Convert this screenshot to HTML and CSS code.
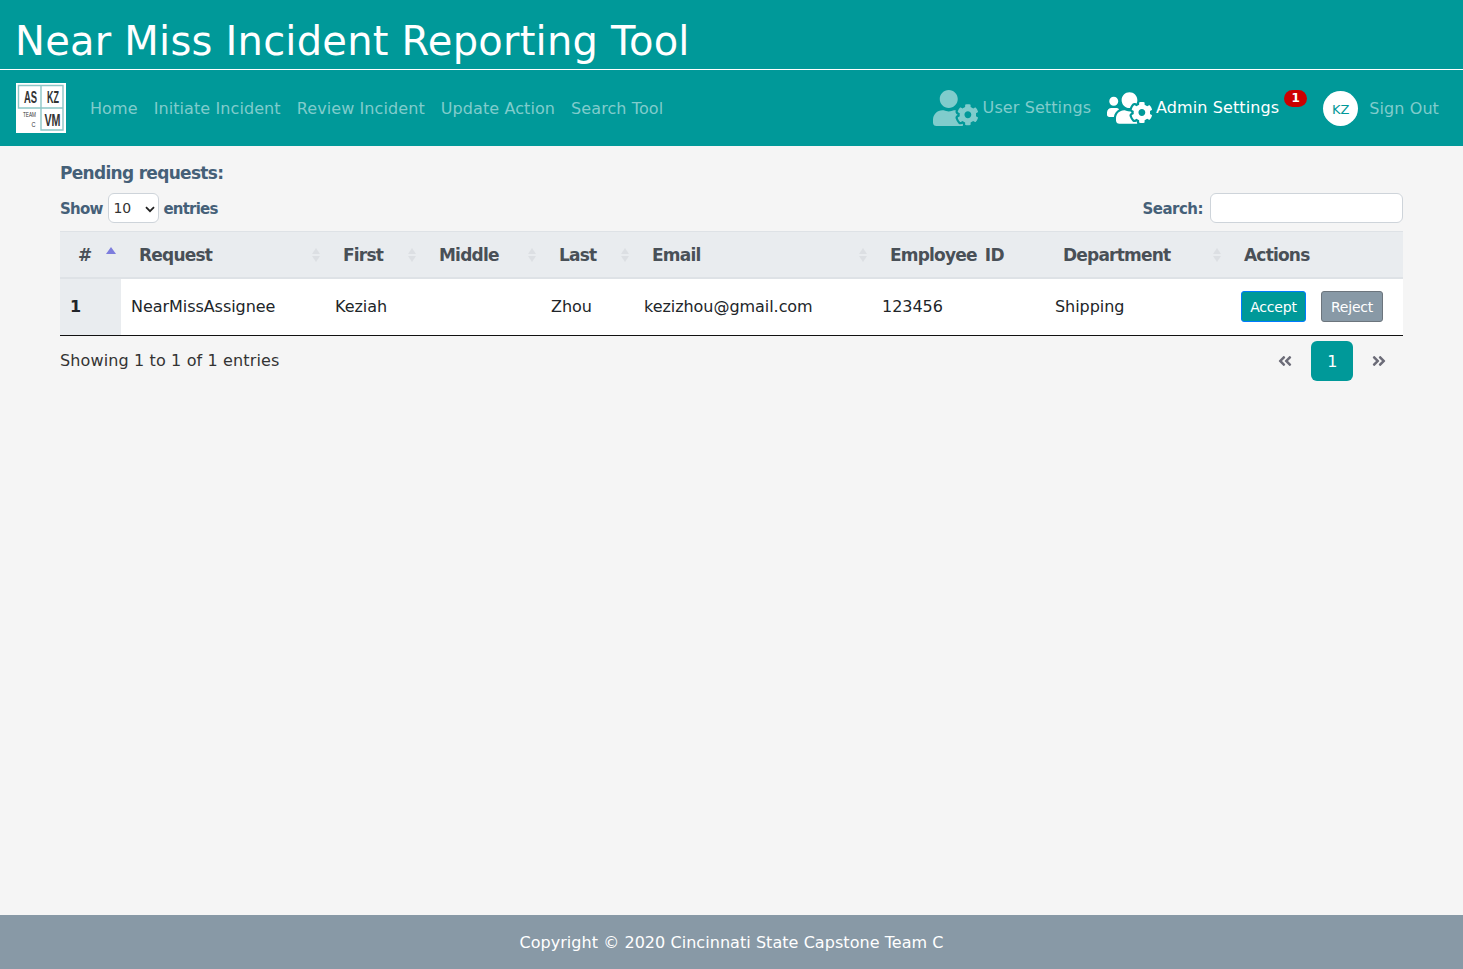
FILE: index.html
```html
<!DOCTYPE html>
<html lang="en">
<head>
  <meta charset="UTF-8">
  <meta name="viewport" content="width=device-width, initial-scale=1.0">
  <title>Near Miss Incident Reporting Tool</title>
  <link rel="stylesheet" href="styles.css">
</head>
<body>
  <header class="site-header">
    <h1 class="site-title">Near Miss Incident Reporting Tool</h1>
    <nav class="navbar">
      <svg class="logo" viewBox="0 0 50 50">
        <rect width="50" height="50" fill="#fff"/>
        <path d="M2.5 2.5H25V25H2.5zM25 2.5H47V25H25zM25 25H47V47H25z" fill="none" stroke="#8cc6c6" stroke-width="1.4"/>
        <text class="logo-big" transform="translate(14.5 20) scale(.59 1)">AS</text>
        <text class="logo-big" transform="translate(37 20) scale(.56 1)">KZ</text>
        <text class="logo-big" transform="translate(36.5 42.5) scale(.67 1)">VM</text>
        <text class="logo-small" transform="translate(13.5 34) scale(.67 1)">TEAM</text>
        <text class="logo-small" transform="translate(17.5 44) scale(.8 1)">C</text>
      </svg>
      <ul class="nav-links">
        <li><a href="#">Home</a></li>
        <li><a href="#">Initiate Incident</a></li>
        <li><a href="#">Review Incident</a></li>
        <li><a href="#">Update Action</a></li>
        <li><a href="#">Search Tool</a></li>
      </ul>
      <div class="nav-right">
        <a href="#" class="nav-icon-link">
          <svg class="nav-icon" viewBox="0 0 640 512"><path d="M610.5 373.3c2.6-14.1 2.6-28.5 0-42.6l25.8-14.9c3-1.7 4.3-5.2 3.3-8.5-6.7-21.6-18.2-41.2-33.2-57.4-2.3-2.5-6-3.1-9-1.4l-25.8 14.9c-10.9-9.3-23.4-16.5-36.9-21.3v-29.8c0-3.4-2.4-6.4-5.7-7.1-22.3-5-45-4.8-66.2 0-3.3.7-5.7 3.7-5.7 7.1v29.8c-13.5 4.8-26 12-36.9 21.3l-25.8-14.9c-2.9-1.7-6.7-1.1-9 1.4-15 16.2-26.5 35.8-33.2 57.4-1 3.3.4 6.8 3.3 8.5l25.8 14.9c-2.6 14.1-2.6 28.5 0 42.6l-25.8 14.9c-3 1.7-4.3 5.2-3.3 8.5 6.7 21.6 18.2 41.1 33.2 57.4 2.3 2.5 6 3.1 9 1.4l25.8-14.9c10.9 9.3 23.4 16.5 36.9 21.3v29.8c0 3.4 2.4 6.4 5.7 7.1 22.3 5 45 4.8 66.2 0 3.3-.7 5.7-3.7 5.7-7.1v-29.8c13.5-4.8 26-12 36.9-21.3l25.8 14.9c2.9 1.7 6.7 1.1 9-1.4 15-16.2 26.5-35.8 33.2-57.4 1-3.3-.4-6.8-3.3-8.5l-25.8-14.9zM496 400.5c-26.8 0-48.5-21.8-48.5-48.5s21.8-48.5 48.5-48.5 48.5 21.8 48.5 48.5-21.7 48.5-48.5 48.5zM224 256c70.7 0 128-57.3 128-128S294.7 0 224 0 96 57.3 96 128s57.3 128 128 128zm201.2 226.5c-2.3-1.2-4.6-2.6-6.8-3.9l-7.9 4.6c-6 3.4-12.8 5.3-19.6 5.3-10.9 0-21.4-4.6-28.9-12.6-18.3-19.8-32.3-43.9-40.2-69.6-5.5-17.7 1.9-36.4 17.9-45.7l7.9-4.6c-.1-2.6-.1-5.2 0-7.8l-7.9-4.6c-16-9.2-23.4-28-17.9-45.7.9-2.9 2.2-5.8 3.2-8.7-3.8-.3-7.5-1.2-11.4-1.2h-16.7c-22.2 10.2-46.9 16-72.9 16s-50.6-5.8-72.9-16h-16.7C60.2 288 0 348.2 0 422.4V464c0 26.5 21.5 48 48 48h352c10.1 0 19.5-3.2 27.2-8.5-1.2-3.8-2-7.7-2-11.8v-9.2z"/></svg>
          <span class="nav-label">User Settings</span>
        </a>
        <a href="#" class="nav-icon-link active">
          <svg class="nav-icon" viewBox="0 0 640 512"><path d="M610.5 341.3c2.6-14.1 2.6-28.5 0-42.6l25.8-14.9c3-1.7 4.3-5.2 3.3-8.5-6.7-21.6-18.2-41.2-33.2-57.4-2.3-2.5-6-3.1-9-1.4l-25.8 14.9c-10.9-9.3-23.4-16.5-36.9-21.3v-29.8c0-3.4-2.4-6.4-5.7-7.1-22.3-5-45-4.8-66.2 0-3.3.7-5.7 3.7-5.7 7.1v29.8c-13.5 4.8-26 12-36.9 21.3l-25.8-14.9c-2.9-1.7-6.7-1.1-9 1.4-15 16.2-26.5 35.8-33.2 57.4-1 3.3.4 6.8 3.3 8.5l25.8 14.9c-2.6 14.1-2.6 28.5 0 42.6l-25.8 14.9c-3 1.7-4.3 5.2-3.3 8.5 6.7 21.6 18.2 41.1 33.2 57.4 2.3 2.5 6 3.1 9 1.4l25.8-14.9c10.9 9.3 23.4 16.5 36.9 21.3v29.8c0 3.4 2.4 6.4 5.7 7.1 22.3 5 45 4.8 66.2 0 3.3-.7 5.7-3.7 5.7-7.1v-29.8c13.5-4.8 26-12 36.9-21.3l25.8 14.9c2.9 1.7 6.7 1.1 9-1.4 15-16.2 26.5-35.8 33.2-57.4 1-3.3-.4-6.8-3.3-8.5l-25.8-14.9zM496 368.5c-26.8 0-48.5-21.8-48.5-48.5s21.8-48.5 48.5-48.5 48.5 21.8 48.5 48.5-21.7 48.5-48.5 48.5zM96 224c35.3 0 64-28.7 64-64s-28.7-64-64-64-64 28.7-64 64 28.7 64 64 64zm224 32c1.9 0 3.7-.5 5.6-.6 8.3-21.7 20.5-42.1 36.3-59.2 7.4-8 17.9-12.6 28.9-12.6 6.9 0 13.7 1.8 19.6 5.3l7.9 4.6c.8-.5 1.6-.9 2.4-1.4 7-14.6 11.2-30.8 11.2-48 0-61.9-50.1-112-112-112S208 82.1 208 144c0 61.9 50.1 112 112 112zm105.2 194.5c-2.3-1.2-4.6-2.6-6.8-3.9-8.2 4.8-15.3 9.8-27.5 9.8-10.9 0-21.4-4.6-28.9-12.6-18.3-19.8-32.3-43.9-40.2-69.6-10.7-34.5 24.9-49.7 25.8-50.3-.1-2.6-.1-5.2 0-7.8l-7.9-4.6c-3.8-2.2-7-5-9.8-8.1-3.3.2-6.5.6-9.8.6-24.6 0-47.6-6-68.5-16h-8.3C179.6 288 128 339.6 128 403.2V432c0 26.5 21.5 48 48 48h255.4c-3.7-6-6.2-12.8-6.2-20.3v-9.2zM173.1 274.6C161.5 263.1 145.6 256 128 256H64c-35.3 0-64 28.7-64 64v32c0 17.7 14.3 32 32 32h65.9c6.3-47.4 34.9-87.3 75.2-109.4z"/></svg>
          <span class="nav-label">Admin Settings</span>
          <span class="badge">1</span>
        </a>
        <span class="avatar">KZ</span>
        <a href="#" class="sign-out">Sign Out</a>
      </div>
    </nav>
  </header>

  <main class="content">
    <h2 class="page-heading">Pending requests:</h2>
    <div class="table-controls">
      <label class="ctl-label"><span class="ctl-text">Show</span>
        <select>
          <option>10</option>
          <option>25</option>
        </select>
        <span class="ctl-text">entries</span></label>
      <label class="ctl-label search-label"><span class="ctl-text">Search:</span> <input type="text"></label>
    </div>

    <table class="requests">
      <colgroup>
        <col class="c-num"><col class="c-request"><col class="c-first"><col class="c-middle"><col class="c-last"><col class="c-email"><col class="c-emp"><col class="c-dept"><col class="c-actions">
      </colgroup>
      <thead>
        <tr>
          <th><div class="th-in">#<i class="sort-up"></i></div></th>
          <th><div class="th-in">Request<i class="sort"></i></div></th>
          <th><div class="th-in">First<i class="sort"></i></div></th>
          <th><div class="th-in">Middle<i class="sort"></i></div></th>
          <th><div class="th-in">Last<i class="sort"></i></div></th>
          <th><div class="th-in">Email<i class="sort"></i></div></th>
          <th><div class="th-in">Employee ID</div></th>
          <th><div class="th-in">Department<i class="sort"></i></div></th>
          <th><div class="th-in">Actions</div></th>
        </tr>
      </thead>
      <tbody>
        <tr>
          <td class="row-num">1</td>
          <td>NearMissAssignee</td>
          <td>Keziah</td>
          <td></td>
          <td>Zhou</td>
          <td>kezizhou@gmail.com</td>
          <td>123456</td>
          <td>Shipping</td>
          <td class="row-actions">
            <button class="btn btn-accept">Accept</button>
            <button class="btn btn-reject">Reject</button>
          </td>
        </tr>
      </tbody>
    </table>

    <div class="table-footer">
      <span class="entries-info">Showing 1 to 1 of 1 entries</span>
      <div class="pager">
        <svg class="pager-arrow" viewBox="0 0 448 512"><path d="M223.7 239l136-136c9.4-9.4 24.6-9.4 33.9 0l22.6 22.6c9.4 9.4 9.4 24.6 0 33.9L319.9 256l96.4 96.4c9.4 9.4 9.4 24.6 0 33.9L393.7 409c-9.4 9.4-24.6 9.4-33.9 0l-136-136c-9.5-9.4-9.5-24.6-.1-34zm-192 34l136 136c9.4 9.4 24.6 9.4 33.9 0l22.6-22.6c9.4-9.4 9.4-24.6 0-33.9L127.9 256l96.4-96.4c9.4-9.4 9.4-24.6 0-33.9L201.7 103c-9.4-9.4-24.6-9.4-33.9 0l-136 136c-9.5 9.4-9.5 24.6-.1 34z"/></svg>
        <span class="page-current">1</span>
        <svg class="pager-arrow" viewBox="0 0 448 512"><path d="M224.3 273l-136 136c-9.4 9.4-24.6 9.4-33.9 0l-22.6-22.6c-9.4-9.4-9.4-24.6 0-33.9l96.4-96.4-96.4-96.4c-9.4-9.4-9.4-24.6 0-33.9L54.3 103c9.4-9.4 24.6-9.4 33.9 0l136 136c9.5 9.4 9.5 24.6.1 34zm192-34l-136-136c-9.4-9.4-24.6-9.4-33.9 0l-22.6 22.6c-9.4 9.4-9.4 24.6 0 33.9l96.4 96.4-96.4 96.4c-9.4 9.4-9.4 24.6 0 33.9l22.6 22.6c9.4 9.4 24.6 9.4 33.9 0l136-136c9.4-9.2 9.4-24.4 0-33.8z"/></svg>
      </div>
    </div>
  </main>

  <footer class="site-footer">Copyright © 2020 Cincinnati State Capstone Team C</footer>
</body>
</html>
```

FILE: styles.css
```css
* {
  box-sizing: border-box;
}

body {
  margin: 0;
  min-height: 969px;
  display: flex;
  flex-direction: column;
  font-family: "DejaVu Sans", sans-serif;
  font-size: 15px;
  color: #333;
  background-color: #f5f5f5;
}

a {
  text-decoration: none;
}

.site-header {
  background-color: #009999;
}

.site-title {
  margin: 0;
  height: 70px;
  padding: 16px 15px 0;
  border-bottom: 1px solid #fff;
  font-size: 40px;
  font-weight: normal;
  line-height: 50px;
  letter-spacing: 0.23px;
  color: #fff;
}

.navbar {
  display: flex;
  align-items: center;
  height: 76px;
  padding: 0 24px 0 16px;
}

.logo {
  width: 50px;
  height: 50px;
}

.logo-big {
  font-family: "Liberation Sans", sans-serif;
  font-size: 16px;
  font-weight: bold;
  fill: #333;
  text-anchor: middle;
}

.logo-small {
  font-family: "Liberation Sans", sans-serif;
  font-size: 7px;
  fill: #333;
  text-anchor: middle;
}

.nav-links {
  display: flex;
  gap: 16px;
  list-style: none;
  margin: 0 0 0 24px;
  padding: 0;
  letter-spacing: 0.09px;
}

.nav-links a,
.nav-icon-link,
.sign-out {
  font-size: 16px;
  color: #80cccc;
}

.nav-right {
  display: flex;
  align-items: center;
  margin-left: auto;
  letter-spacing: 0.1px;
}

.nav-icon-link {
  position: relative;
  display: flex;
  align-items: center;
  gap: 5px;
  margin-right: 16px;
}

.nav-label {
  margin-top: -2px;
}

.nav-icon {
  width: 45px;
  height: 36px;
  fill: #80cccc;
}

.nav-icon-link.active {
  gap: 4px;
  color: #fff;
  margin-right: 44px;
}

.nav-icon-link.active .nav-icon {
  fill: #fff;
}

.badge {
  position: absolute;
  right: -28px;
  top: 0;
  width: 23px;
  height: 17px;
  border-radius: 9px;
  background-color: #cc0000;
  color: #fff;
  font-size: 12px;
  font-weight: bold;
  line-height: 17px;
  text-align: center;
}

.avatar {
  width: 35px;
  height: 35px;
  border-radius: 50%;
  margin-right: 11px;
  background-color: #fff;
  color: #009999;
  font-size: 13px;
  line-height: 37px;
  text-align: center;
}

.content {
  flex: 1;
  padding: 16px 60px 0;
}

.page-heading {
  margin: 0;
  font-size: 17px;
  line-height: 23px;
  letter-spacing: -0.7px;
  color: #456078;
}

.table-controls {
  display: flex;
  justify-content: space-between;
  align-items: center;
  margin-top: 8px;
  font-size: 15px;
  font-weight: bold;
  letter-spacing: -0.8px;
  color: #456078;
}

.ctl-label {
  display: flex;
  align-items: center;
}

.ctl-text {
  padding-top: 2px;
}

.table-controls select {
  appearance: none;
  width: 51px;
  height: 30px;
  margin: 0 4px 0 6px;
  padding-left: 4px;
  border: 1px solid #ced4da;
  border-radius: 6px;
  background: #fff url("data:image/svg+xml,%3Csvg xmlns='http://www.w3.org/2000/svg' viewBox='0 0 10 7'%3E%3Cpath d='M1 1.2l4 4 4-4' fill='none' stroke='%23222' stroke-width='1.8'/%3E%3C/svg%3E") no-repeat 36px 12px / 10px 7px;
  font-family: inherit;
  font-size: 14px;
  color: #333;
}

.table-controls input {
  width: 193px;
  height: 30px;
  margin-left: 7px;
  border: 1px solid #ced4da;
  border-radius: 6px;
  background-color: #fff;
}

.search-label {
  letter-spacing: -0.5px;
}

.requests {
  width: 100%;
  margin-top: 8px;
  table-layout: fixed;
  border-collapse: collapse;
  background-color: #fff;
}

.c-num { width: 61px; }
.c-request { width: 204px; }
.c-first { width: 96px; }
.c-middle { width: 120px; }
.c-last { width: 93px; }
.c-email { width: 238px; }
.c-emp { width: 173px; }
.c-dept { width: 181px; }
.c-actions { width: 177px; }

.requests th {
  height: 46px;
  padding: 1px 5px 0 18px;
  border-top: 1px solid #dee2e6;
  border-bottom: 2px solid #dee2e6;
  background-color: #e9ecef;
  font-size: 17px;
  letter-spacing: -0.8px;
  word-spacing: 3px;
  text-align: left;
  color: #495057;
}

.th-in {
  display: flex;
  justify-content: space-between;
  align-items: center;
}

.sort {
  display: flex;
  flex-direction: column;
  gap: 2px;
}

.sort::before,
.sort::after {
  content: "";
  border-left: 4px solid transparent;
  border-right: 4px solid transparent;
}

.sort::before {
  border-bottom: 6px solid #dcdfe3;
}

.sort::after {
  border-top: 6px solid #dcdfe3;
}

.sort-up {
  width: 0;
  height: 0;
  margin-top: -8px;
  border-left: 5px solid transparent;
  border-right: 5px solid transparent;
  border-bottom: 7px solid #7d7ddd;
}

.requests td {
  height: 58px;
  padding: 0 10px;
  border-bottom: 1px solid #111;
  font-size: 16px;
  letter-spacing: -0.05px;
  color: #212529;
}

.requests td.row-num {
  background-color: #e9ecef;
  font-weight: bold;
}

.requests td.row-actions {
  padding: 0 20px 0 15px;
  white-space: nowrap;
}

.btn {
  height: 31px;
  padding: 0;
  border-radius: 3px;
  font-family: inherit;
  font-size: 14px;
  letter-spacing: -0.2px;
  color: #fff;
}

.btn-accept {
  width: 65px;
  border: 1px solid #007bff;
  background-color: #009999;
}

.btn-reject {
  width: 62px;
  margin-left: 10px;
  border: 1px solid #6c757d;
  background-color: #8899a6;
}

.table-footer {
  display: flex;
  justify-content: space-between;
  align-items: center;
  margin-top: 5px;
  font-size: 16px;
  letter-spacing: 0.13px;
}

.entries-info {
  margin-bottom: 2px;
}

.pager {
  display: flex;
  align-items: center;
  gap: 18px;
  padding-right: 16px;
}

.pager-arrow {
  width: 16px;
  height: 16px;
  fill: #6c6c78;
}

.page-current {
  width: 42px;
  height: 40px;
  padding-left: 1px;
  border-radius: 6px;
  background-color: #009999;
  color: #fff;
  line-height: 41px;
  text-align: center;
}

.site-footer {
  height: 54px;
  background-color: #8899a6;
  color: #fff;
  font-size: 16px;
  letter-spacing: 0.05px;
  line-height: 55px;
  text-align: center;
}
```
